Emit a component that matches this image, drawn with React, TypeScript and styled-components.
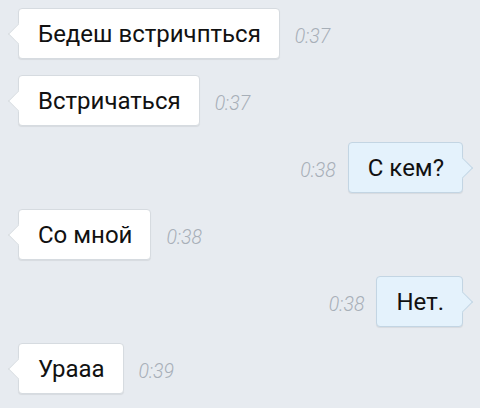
import React from "react";
import styled, { createGlobalStyle, css } from "styled-components";

interface Message {
	text: string;
	time: string;
	mine: boolean;
}

const messages: Message[] = [
	{ text: "Бедеш встричпться", time: "0:37", mine: false },
	{ text: "Встричаться", time: "0:37", mine: false },
	{ text: "С кем?", time: "0:38", mine: true },
	{ text: "Со мной", time: "0:38", mine: false },
	{ text: "Нет.", time: "0:38", mine: true },
	{ text: "Урааа", time: "0:39", mine: false },
];

const GlobalStyle = createGlobalStyle`
	html, body {
		margin: 0;
		padding: 0;
		background: #e7ebf0;
	}
	body {
		font-family: Roboto, "Liberation Sans", sans-serif;
	}
`;

const Chat = styled.div`
	width: 480px;
	height: 408px;
	box-sizing: border-box;
	padding: 8px 17px 0 18px;
	display: flex;
	flex-direction: column;
	gap: 16px;
	background: #e7ebf0;
	overflow: hidden;
`;

const Row = styled.div<{ $mine: boolean }>`
	display: flex;
	align-items: center;
	gap: ${(p) => (p.$mine ? "12px" : "15px")};
	flex-direction: ${(p) => (p.$mine ? "row-reverse" : "row")};
`;

const Bubble = styled.div<{ $mine: boolean }>`
	position: relative;
	box-sizing: border-box;
	height: 51px;
	padding: 0 18px 0 19px;
	display: flex;
	align-items: center;
	font-size: 24px;
	color: #111;
	border-radius: 4px;
	border: 1px solid ${(p) => (p.$mine ? "#c3d5e3" : "#d6dbe0")};
	background: ${(p) => (p.$mine ? "#e4f2fc" : "#ffffff")};
	box-shadow: 0 1px 1px rgba(0, 0, 0, 0.07);

	&::before {
		content: "";
		position: absolute;
		top: 50%;
		width: 14px;
		height: 14px;
		background: inherit;
		transform: translateY(-50%) rotate(45deg);
		${(p) =>
			p.$mine
				? css`
						right: -8px;
						border-top: 1px solid #c3d5e3;
						border-right: 1px solid #c3d5e3;
				  `
				: css`
						left: -8px;
						border-left: 1px solid #d6dbe0;
						border-bottom: 1px solid #d6dbe0;
				  `}
	}
`;

const BubbleText = styled.span`
	position: relative;
	z-index: 1;
	line-height: 28px;
`;

const Time = styled.span`
	font-size: 19.5px;
	font-style: italic;
	font-weight: 300;
	color: #a7afb8;
	padding-top: 6px;
`;

const App = () => {
	return (
		<>
			<GlobalStyle />
			<Chat>
				{messages.map((m, i) => (
					<Row key={i} $mine={m.mine}>
						<Bubble $mine={m.mine}>
							<BubbleText>{m.text}</BubbleText>
						</Bubble>
						<Time>{m.time}</Time>
					</Row>
				))}
			</Chat>
		</>
	);
};

export default App;
